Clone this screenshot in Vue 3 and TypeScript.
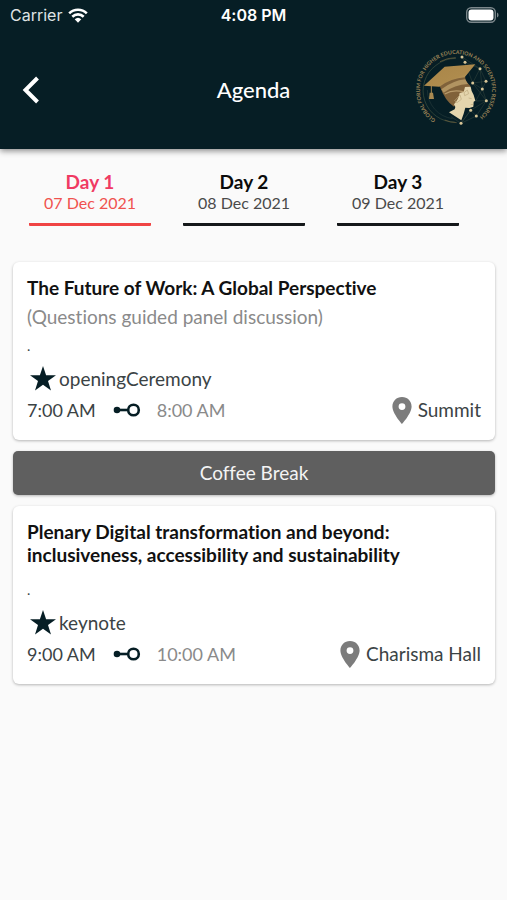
<script setup lang="ts">
import { ref } from 'vue'

interface Day {
  label: string
  date: string
}

interface Session {
  kind: 'session'
  title: string
  subtitle?: string
  note: string
  type: string
  start: string
  end: string
  place: string
}

interface Break {
  kind: 'break'
  title: string
}

const days: Day[] = [
  { label: 'Day 1', date: '07 Dec 2021' },
  { label: 'Day 2', date: '08 Dec 2021' },
  { label: 'Day 3', date: '09 Dec 2021' },
]

const items: (Session | Break)[] = [
  {
    kind: 'session',
    title: 'The Future of Work: A Global Perspective',
    subtitle: '(Questions guided panel discussion)',
    note: '.',
    type: 'openingCeremony',
    start: '7:00 AM',
    end: '8:00 AM',
    place: 'Summit',
  },
  { kind: 'break', title: 'Coffee Break' },
  {
    kind: 'session',
    title: 'Plenary Digital transformation and beyond: inclusiveness, accessibility and sustainability',
    note: '.',
    type: 'keynote',
    start: '9:00 AM',
    end: '10:00 AM',
    place: 'Charisma Hall',
  },
]

const stars: [number, number][] = [
  [144, 27], [153, 43], [198, 62], [216, 100], [176, 105],
  [205, 123], [217, 158], [170, 187], [187, 204], [141, 226],
]

const selected = ref(0)
</script>

<template>
  <div class="page">
    <header class="top">
      <div class="status">
        <div class="carrier">
          <span>Carrier</span>
          <svg class="wifi" viewBox="0 0 20 15" aria-hidden="true">
            <path d="M1.2 5.4a12.6 12.6 0 0 1 17.6 0" />
            <path d="M4.3 8.7a8.2 8.2 0 0 1 11.4 0" />
            <path class="wifi-dot" d="M6.7 11.3a4.8 4.8 0 0 1 6.6 0L10 14.8z" />
          </svg>
        </div>
        <span class="clock">4:08 PM</span>
        <svg class="battery" viewBox="0 0 33 16" aria-hidden="true">
          <rect class="shell" x="0.7" y="0.7" width="28.6" height="14.6" rx="4.5" />
          <rect class="charge" x="2.5" y="2.5" width="25" height="11" rx="3" />
          <path class="tip" d="M31 5.5q1.6.8 1.6 2.5T31 10.500z" />
        </svg>
      </div>
      <div class="bar">
        <button class="back" type="button" aria-label="Back">
          <svg viewBox="0 0 18 28" aria-hidden="true"><path d="M15.500 2 3.500 14l12 12" /></svg>
        </button>
        <h1>Agenda</h1>
        <svg class="logo" viewBox="0 0 252 252" aria-hidden="true">
          <defs>
            <path id="ring" d="M65 215A108 108 0 1 1 187 215" />
            <linearGradient id="gold" x1="0" y1="0" x2="1" y2="1">
              <stop offset="0" stop-color="#a98548" />
              <stop offset="0.6" stop-color="#ae8b4d" />
              <stop offset="1" stop-color="#cfb27b" />
            </linearGradient>
          </defs>
          <text class="motto"><textPath href="#ring">GLOBAL FORUM FOR HIGHER EDUCATION AND SCIENTIFIC RESEARCH</textPath></text>
          <path class="orbit" d="M122 222A94 94 0 0 1 66 52Q92 31 126 31" />
          <path class="orbit faint" d="M116 212A87 87 0 0 1 40 126" />
          <path class="orbit bright" d="M78 41q22-12 47-12M92 216q18 8 36 8" />
          <path class="web" d="M144 27 153 43 198 62 216 100 205 123 217 158 187 204 141 226 170 187 187 204M153 43l23 62 22-43 7 61-29-18 40-5M217 158l-47 29M205 123l-20 36 32-1M144 27l54 35M141 226l-30-20M170 187l-29 39M176 105l41 53" />
          <path class="hat" d="M76 112q36-22 76-37l3 24 15 16-20 17-30 44q-26-15-44-64z" />
          <path class="band" d="M82 124q34-26 72-30l8 14q-40 2-73 26z" />
          <path class="seam" d="M92 138q26-15 58-6" />
          <path class="board" d="M30 113 92 56 184 49 152 88Q112 91 76 116z" />
          <path class="tassel" d="M52 112v24" />
          <path class="tuft" d="M47 134h10l3 19H45z" />
          <path class="face" d="M120 169q14-15 17-34l12-3 4-15 17-1 3 13 6 12 5 17-5 3-1 15-12 4-12-1-5 18-7 20-37-24 17-9q4-8-2-15z" />
          <path class="detail" d="m122 158 16-17 4 13-13 10zm28-24 10-8 4 11-12 6zm14 16 9 2m-3 18 8-1" />
          <circle v-for="([x, y], i) in stars" :key="i" class="star-dot" :cx="x" :cy="y" r="4.500" />
        </svg>
      </div>
    </header>

    <nav class="days" aria-label="Days">
      <button
        v-for="(day, i) in days"
        :key="day.label"
        type="button"
        class="day"
        :class="{ active: i === selected }"
        :aria-pressed="i === selected"
        @click="selected = i"
      >
        <span class="day-label">{{ day.label }}</span>
        <span class="day-date">{{ day.date }}</span>
      </button>
    </nav>

    <main class="list">
      <template v-for="item in items" :key="item.title">
        <div v-if="item.kind === 'break'" class="break">{{ item.title }}</div>
        <article v-else class="card">
          <h2>{{ item.title }}</h2>
          <p class="subtitle">{{ item.subtitle }}</p>
          <p class="note">{{ item.note }}</p>
          <div class="type">
            <svg class="star" viewBox="0 0 26 25" aria-hidden="true">
              <path d="m13 0 3.100 9.300H26l-8 5.800 3 9.400-8-5.800-8 5.800 3-9.400-8-5.800h9.900z" />
            </svg>
            <span>{{ item.type }}</span>
          </div>
          <div class="meta">
            <time>{{ item.start }}</time>
            <svg class="link" viewBox="0 0 28 14" aria-hidden="true">
              <circle class="dot" cx="4" cy="7" r="3.300" />
              <path d="M4 7h11" />
              <circle cx="20.500" cy="7" r="5.300" />
            </svg>
            <time class="end">{{ item.end }}</time>
            <span class="place">
              <svg class="pin" viewBox="0 0 20 27" aria-hidden="true">
                <path fill-rule="evenodd" d="M10 0C4.400 0 .4 4.200.4 9.500.4 16.500 10 27 10 27s9.600-10.500 9.600-17.500C19.600 4.200 15.600 0 10 0zm0 6.200a3.400 3.400 0 1 1 0 6.800 3.400 3.400 0 0 1 0-6.800z" />
              </svg>
              {{ item.place }}
            </span>
          </div>
        </article>
      </template>
    </main>
  </div>
</template>

<style>
body {
  background: #fafafa;
}
</style>

<style scoped>
.page {
  min-height: 100vh;
  background: #fafafa;
  color: #3b4345;
  font-family: Lato, "Liberation Sans", sans-serif;
  font-size: 19px;
  font-variant-ligatures: none;
  line-height: 24px;
}
button {
  padding: 0;
  border: 0;
  background: none;
  color: inherit;
  font: inherit;
  cursor: pointer;
}
h1,
h2,
p {
  margin: 0;
}
.top {
  background: #061e25;
  color: #fff;
  box-shadow: 0 2px 6px rgba(0, 0, 0, 0.45);
}
.status {
  display: grid;
  grid-template-columns: 1fr auto 1fr;
  align-items: center;
  height: 30px;
  padding: 0 8px;
  font-family: Inter, sans-serif;
  font-size: 16px;
}
.carrier {
  display: flex;
  align-items: center;
  gap: 6px;
  padding-left: 2px;
  color: #dfe3e4;
}
.wifi {
  width: 20px;
  height: 15px;
  fill: none;
  stroke: #fff;
  stroke-width: 2.6;
}
.wifi-dot {
  fill: #fff;
  stroke: none;
}
.clock {
  font-weight: 600;
}
.battery {
  justify-self: end;
  width: 33px;
  height: 16px;
}
.shell {
  fill: none;
  stroke: #7b878b;
  stroke-width: 1.4;
}
.charge {
  fill: #fff;
}
.tip {
  fill: #7b878b;
}
.bar {
  display: grid;
  grid-template-columns: 1fr auto 1fr;
  align-items: center;
  height: 119px;
  padding: 0 9px;
}
.back {
  display: flex;
  align-items: center;
  justify-content: center;
  width: 44px;
  height: 44px;
}
.back svg {
  width: 18px;
  height: 28px;
  fill: none;
  stroke: #fff;
  stroke-width: 4;
}
h1 {
  font-size: 22px;
  font-weight: 500;
}
.logo {
  justify-self: end;
  width: 84px;
  height: 84px;
}
.motto {
  fill: #9a8357;
  font-size: 16px;
  font-weight: 700;
}
.orbit,
.web,
.seam,
.tassel,
.detail {
  fill: none;
  stroke: #41513f;
  stroke-width: 2;
}
.orbit.faint {
  stroke: #24393a;
}
.orbit.bright {
  stroke: #75673f;
}
.web {
  stroke: #34463f;
  stroke-width: 1.500;
}
.hat {
  fill: #80623a;
}
.band {
  fill: #b19461;
}
.seam {
  stroke: #b79b6b;
  stroke-width: 4;
}
.board {
  fill: url(#gold);
}
.tassel {
  stroke: #a98a51;
  stroke-width: 3;
}
.tuft {
  fill: #a98a51;
}
.face {
  fill: #e4d5ad;
}
.detail {
  stroke: #bba77c;
}
.star-dot {
  fill: #d8c596;
}
.days {
  display: grid;
  grid-template-columns: repeat(3, 1fr);
  gap: 32px;
  padding: 21px 48px 0 29px;
}
.day {
  display: flex;
  flex-direction: column;
  align-items: center;
  padding-bottom: 10px;
  border-bottom: 3px solid #15181a;
  border-radius: 1px;
  color: #4a4a4a;
}
.day-label {
  color: #0b0b0b;
  font-size: 19px;
  font-weight: 700;
  line-height: 23px;
}
.day-date {
  font-size: 16px;
  line-height: 20px;
}
.day.active {
  border-color: #f04444;
  color: #f0524f;
}
.day.active .day-label {
  color: #f03a63;
}
.list {
  display: flex;
  flex-direction: column;
  gap: 11px;
  padding: 36px 12px 24px 13px;
}
.card {
  padding: 14px;
  border-radius: 6px;
  background: #fff;
  box-shadow: 0 1px 3px rgba(0, 0, 0, 0.28);
}
h2 {
  color: #111;
  font-size: 19px;
  font-weight: 700;
  line-height: 23px;
}
.subtitle {
  padding-top: 6px;
  color: #8a8a8a;
}
.subtitle:empty {
  padding-top: 7px;
}
.note {
  font-size: 14px;
  line-height: 34px;
}
.type {
  display: flex;
  align-items: center;
  gap: 3px;
  height: 31px;
  padding-left: 3px;
}
.star {
  width: 26px;
  height: 25px;
  fill: #061e25;
}
.meta {
  display: flex;
  align-items: center;
  height: 32px;
}
time {
  font-size: 18px;
}
.link {
  width: 28px;
  height: 14px;
  margin: 0 16px 0 17px;
  fill: none;
  stroke: #061e25;
  stroke-width: 2.6;
}
.link .dot {
  fill: #061e25;
  stroke: none;
}
.end {
  color: #8a8a8a;
}
.place {
  display: flex;
  align-items: center;
  gap: 6px;
  margin-left: auto;
}
.pin {
  width: 20px;
  height: 27px;
  fill: #7c7c7c;
}
.break {
  padding: 10px;
  border-radius: 5px;
  background: #5f5f5f;
  box-shadow: 0 1px 3px rgba(0, 0, 0, 0.28);
  color: #f4f4f4;
  text-align: center;
}
</style>
